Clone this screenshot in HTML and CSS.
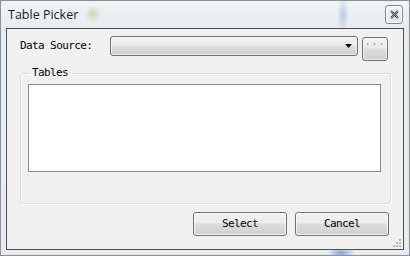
FILE: index.html
```html
<!DOCTYPE html>
<html>
<head>
<meta charset="utf-8">
<link rel="stylesheet" href="styles.css">
</head>
<body>
<div class="window">
  <div class="titlebar">
    <span class="title">Table Picker</span>
    <div class="close">
      <svg width="9" height="9" viewBox="0 0 9 9"><path d="M1 1 L8 8 M8 1 L1 8" stroke="#3a3a3a" stroke-width="2" fill="none"/><path d="M1 1 L8 8 M8 1 L1 8" stroke="#d8d8d8" stroke-width="0.6" fill="none"/></svg>
    </div>
  </div>
  <div class="client">
    <div class="row">
      <span class="label">Data Source:</span>
      <div class="combo">
        <svg class="arrow" width="7" height="4" viewBox="0 0 7 4"><path d="M0 0 H7 L3.5 4 Z" fill="#000"/></svg>
      </div>
      <div class="browse">...</div>
    </div>
    <fieldset class="group">
      <legend>Tables</legend>
      <div class="listbox"></div>
    </fieldset>
    <div class="buttons">
      <div class="btn">Select</div>
      <div class="btn">Cancel</div>
    </div>
    <svg class="grip" width="10" height="10" viewBox="0 0 10 10">
      <g fill="#b8b8b8">
        <rect x="7" y="1" width="2" height="2"/>
        <rect x="4" y="4" width="2" height="2"/><rect x="7" y="4" width="2" height="2"/>
        <rect x="1" y="7" width="2" height="2"/><rect x="4" y="7" width="2" height="2"/><rect x="7" y="7" width="2" height="2"/>
      </g>
    </svg>
  </div>
</div>
</body>
</html>
```
FILE: styles.css
```css
html, body {
  margin: 0;
  padding: 0;
  width: 410px;
  height: 256px;
  overflow: hidden;
  background: #dfe5ea;
}
.window {
  box-sizing: border-box;
  width: 410px;
  height: 256px;
  border: 1px solid #8c8f93;
  display: flex;
  flex-direction: column;
  background:
    radial-gradient(circle at 92px 13px, rgba(170,205,120,0.55) 0, rgba(170,205,120,0) 9px),
    radial-gradient(ellipse 6px 18px at 342px 14px, rgba(120,160,210,0.45) 0, rgba(120,160,210,0) 100%),
    radial-gradient(ellipse 14px 6px at 340px 252px, rgba(60,110,190,0.6) 0, rgba(60,110,190,0) 100%),
    linear-gradient(180deg, #f0f3f6 0, #e6ebf0 30px, #e9edf1 100%);
}
.titlebar {
  height: 27px;
  display: flex;
  align-items: flex-start;
  justify-content: space-between;
  padding: 0 6px 0 7px;
}
.title {
  font-family: "Open Sans", "Noto Sans", sans-serif;
  font-size: 12.5px;
  color: #1b1b1b;
  line-height: 14px;
  margin-top: 7px;
}
.close {
  box-sizing: border-box;
  width: 18px;
  height: 19px;
  margin-top: 4px;
  border: 1px solid #7e8894;
  border-radius: 3px;
  background: linear-gradient(180deg, #f6f8fa, #dfe4ea);
  box-shadow: inset 0 0 0 1px rgba(255,255,255,0.8);
  display: flex;
  align-items: center;
  justify-content: center;
}
.client {
  position: relative;
  flex: 1;
  margin: 0 5px 5px 5px;
  border: 1px solid #4f4f4f;
  background: #f0f0f0;
  padding: 7px 0 0 13px;
  font-family: "DejaVu Sans Mono", "Liberation Mono", monospace;
  font-size: 11px;
  letter-spacing: -0.6px;
  color: #000;
}
.row {
  display: flex;
  align-items: flex-start;
}
.label {
  width: 90px;
  line-height: 20px;
}
.combo {
  box-sizing: border-box;
  position: relative;
  width: 248px;
  height: 20px;
  border: 1px solid #707070;
  border-radius: 3px;
  background: linear-gradient(180deg, #f2f2f2 0, #ebebeb 45%, #dddddd 50%, #cfcfcf 100%);
  box-shadow: inset 0 0 0 1px rgba(255,255,255,0.6);
}
.arrow {
  position: absolute;
  right: 5px;
  top: 7px;
}
.browse {
  box-sizing: border-box;
  width: 26px;
  height: 24px;
  margin: 1px 0 0 4px;
  border: 1px solid #707070;
  border-radius: 3px;
  background: linear-gradient(180deg, #f2f2f2 0, #ebebeb 45%, #dddddd 50%, #cfcfcf 100%);
  box-shadow: inset 0 0 0 1px rgba(255,255,255,0.6);
  text-align: center;
  line-height: 8px;
  font-size: 10px;
  color: #888;
  letter-spacing: 1px;
}
.group {
  box-sizing: border-box;
  width: 371px;
  height: 137px;
  margin: 6px 0 0 0;
  padding: 5px 0 0 7px;
  border: 1px solid #d5dfe5;
  border-radius: 3px;
  box-shadow: inset 1px 1px 0 #fff, 1px 1px 0 #fff;
}
.group legend {
  padding: 0 2px;
  margin-left: 2px;
  line-height: 12px;
}
.listbox {
  box-sizing: border-box;
  width: 353px;
  height: 88px;
  border: 1px solid #828790;
  background: #fff;
}
.buttons {
  display: flex;
  justify-content: flex-end;
  gap: 8px;
  margin: 8px 14px 0 0;
}
.btn {
  box-sizing: border-box;
  width: 94px;
  height: 24px;
  border: 1px solid #707070;
  border-radius: 3px;
  background: linear-gradient(180deg, #f2f2f2 0, #ebebeb 45%, #dddddd 50%, #cfcfcf 100%);
  box-shadow: inset 0 0 0 1px rgba(255,255,255,0.7);
  text-align: center;
  line-height: 22px;
}
.grip {
  position: absolute;
  right: 1px;
  bottom: 1px;
}
```
